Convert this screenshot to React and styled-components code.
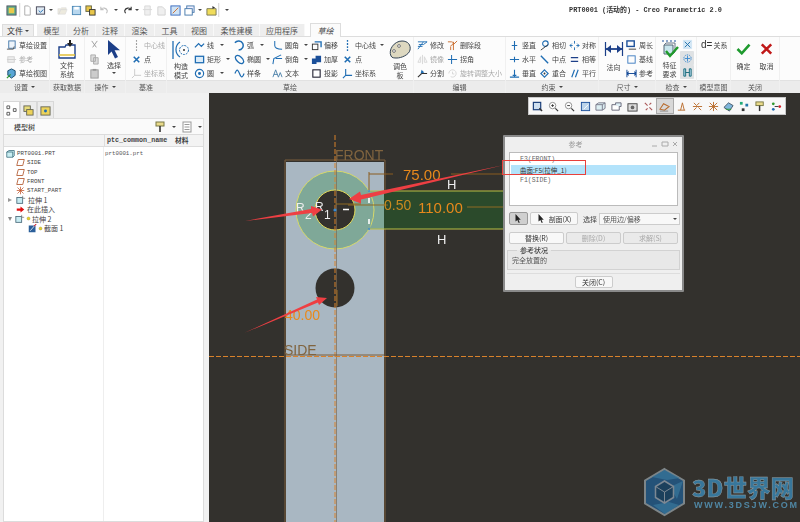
import React from 'react';
import styled, { createGlobalStyle } from 'styled-components';

const Global = createGlobalStyle`
  html, body { margin: 0; padding: 0; background: #fff; overflow: hidden; }
  body { font-family: "Noto Sans CJK SC", "Liberation Sans", sans-serif; }
  * { box-sizing: border-box; }
`;
const CJK = `"Noto Sans CJK SC", "Liberation Sans", sans-serif`;
const MONO = `"Liberation Mono", "Noto Sans CJK SC", monospace`;

const Page = styled.div`width: 800px; height: 522px; display: flex; flex-direction: column; overflow: hidden; filter: blur(0.35px); color: #444;`;
const TopBar = styled.header`height: 24px; flex: none; display: flex; align-items: flex-start; padding: 3px 0 0 3px; background: #fff;`;
const QSlot = styled.div`width: ${p => p.$w}px; height: 14px; flex: none; display: flex; align-items: center; justify-content: center; opacity: ${p => p.$dim ? .45 : 1};`;
const QSep = styled.div`width: 2px; height: 14px; flex: none; background: #ddd; border-right: 1px solid #f5f5f5;`;
const Caret = styled.span`display: inline-block; width: 0; height: 0; flex: none; border-left: 2px solid transparent; border-right: 2px solid transparent; border-top: 2.5px solid #444;`;
const Title = styled.div`margin-left: auto; margin-right: 78px; margin-top: 2px; font: bold 6.9px/11px ${MONO}; color: #333; white-space: nowrap;`;

const TabRow = styled.nav`height: 12px; flex: none; display: flex; align-items: flex-end; padding-left: 2px; background: #fff; position: relative; z-index: 1;`;
const FileTab = styled.div`width: 32px; height: 12px; margin-right: 3px; background: #eee; border: 1px solid #ddd; border-bottom: 0; display: flex; gap: 2px; align-items: center; justify-content: center; font-size: 8px; color: #333;`;
const Tab = styled.div`width: ${p => p.$w}px; height: 12px; flex: none; background: #eee; border-right: 1px solid #f8f8f8; display: flex; align-items: center; justify-content: center; font-size: 8px; color: #555;`;
const ActiveTab = styled.div`width: 31px; height: 14px; margin-left: 5px; margin-bottom: -1px; background: #fbfbfb; border: 1px solid #ddd; border-bottom: 0; display: flex; align-items: center; justify-content: center; font: italic 8px ${CJK}; color: #444;`;

const Ribbon = styled.section`height: 57px; flex: none; display: flex; background: #fcfcfc; border-top: 1px solid #ddd;`;
const Group = styled.div`width: ${p => p.$w}px; flex: none; display: flex; flex-direction: column; border-right: 1px solid #f0f0f0;`;
const GroupBody = styled.div`height: 43px; flex: none; display: flex; padding-left: ${p => p.$pad || 0}px; gap: ${p => p.$gap || 0}px; justify-content: ${p => p.$center ? 'center' : 'flex-start'};`;
const GroupLabel = styled.div`height: 13px; flex: none; background: #ececec; border-top: 1px solid #e2e2e2; display: flex; align-items: center; justify-content: center; gap: 3px; font-size: 7px; color: #555;`;
const Filler = styled.div`flex: 1; display: flex; flex-direction: column; > div:last-child { margin-top: auto; height: 13px; background: #ececec; border-top: 1px solid #e2e2e2; }`;
const Col = styled.div`width: ${p => p.$w}px; flex: none; display: flex; flex-direction: column; padding-top: 1px;`;
const Tool = styled.div`height: 14px; display: flex; align-items: center; gap: 2px; white-space: nowrap; font-size: 7px; color: ${p => p.$off ? '#aaa' : '#444'}; > svg { flex: none; opacity: ${p => p.$off ? .45 : 1}; }`;
const DEq = styled.span`font: 10px/14px "Liberation Sans", sans-serif; color: #333; margin-right: -1px;`;
const Big = styled.div`width: ${p => p.$w}px; flex: none; display: flex; flex-direction: column; align-items: center; padding-top: ${p => p.$top ?? 3}px; font-size: 7px; line-height: 8.5px; color: #444; text-align: center;`;
const BigLabel = styled.div`margin-top: ${p => p.$m ?? 2}px; display: flex; flex-direction: column; align-items: center; gap: ${p => p.$g || 0}px;`;
const Stack = styled.div`width: 14px; flex: none; display: flex; flex-direction: column;`;
const StackCell = styled.div`height: 14px; display: flex; align-items: center; justify-content: center; background: ${p => p.$on ? '#dfe2e4' : 'transparent'}; border-radius: 1px;`;

const Main = styled.main`flex: 1; min-height: 0; display: flex;`;
const Side = styled.aside`width: 209px; flex: none; background: #f1f1f1; padding: 8px 5px 0 3px; display: flex; flex-direction: column;`;
const SideTabs = styled.div`height: 17px; flex: none; display: flex;`;
const SideTab = styled.div`width: 17px; height: 17px; background: ${p => p.$on ? '#fff' : '#ececec'}; border: 1px solid #d8d8d8; border-bottom: 0; display: flex; align-items: center; justify-content: center;`;
const TreeHead = styled.div`height: 16px; flex: none; background: #fafafa; border: 1px solid #e0e0e0; border-bottom: 0; display: flex; align-items: center; padding: 0 1px 0 10px; font-size: 7px; font-weight: 500; color: #444;`;
const HeadTools = styled.div`margin-left: auto; display: flex; align-items: center; gap: 5px;`;
const Tree = styled.div`flex: 1; background: #fff; border: 1px solid #dcdcdc; display: flex; flex-direction: column; min-height: 0;`;
const ColHeads = styled.div`height: 12px; flex: none; background: #f3f3f3; border-bottom: 1px solid #ddd; display: grid; grid-template-columns: 100px 69px 1fr;`;
const ColHead = styled.div`font: bold 6.7px/11px ${p => p.$cjk ? CJK : MONO}; color: #444; padding-left: ${p => p.$pl || 0}px; border-left: ${p => p.$line ? '1px solid #ddd' : 0}; white-space: nowrap;`;
const TreeBody = styled.div`flex: 1; display: grid; grid-template-columns: 100px 1fr;`;
const Names = styled.div`display: flex; flex-direction: column; padding-top: 2px; border-right: 1px solid #eee;`;
const Row = styled.div`height: 9.3px; display: flex; align-items: center; gap: ${p => p.$g ?? 2}px; padding-left: ${p => p.$in}px; white-space: nowrap; font: ${p => p.$latin ? `5.8px ${MONO}` : `7px ${CJK}`}; color: #444;`;
const Tri = styled.span`width: 0; height: 0; margin-right: 2px; flex: none; ${p => p.$open
  ? 'border-left: 2.5px solid transparent; border-right: 2.5px solid transparent; border-top: 4px solid #888;'
  : 'border-top: 2.5px solid transparent; border-bottom: 2.5px solid transparent; border-left: 4px solid #999;'}`;
const Values = styled.div`padding: 3px 0 0 1px; font: 5.8px/8px ${MONO}; color: #555;`;

const Canvas = styled.div`flex: 1; position: relative; background: #33312d; overflow: hidden;`;
const Drawing = styled.svg`position: absolute; inset: 0; width: 100%; height: 100%; display: block;`;
const FloatBar = styled.div`position: absolute; left: 319px; top: 4px; width: 258px; height: 18px; display: flex; background: #f8f8f8; border: 1px solid #c9c9c9; padding: 0 1px;`;
const FloatBtn = styled.div`flex: 1; display: flex; align-items: center; justify-content: center; background: ${p => p.$on ? '#d8d8d8' : 'transparent'}; border: ${p => p.$on ? '1px solid #aaa' : 0};`;

const Dialog = styled.div`position: absolute; left: 294px; top: 42px; width: 181px; height: 157px; background: #efefef; border: 2px solid #8a8a8a; border-radius: 1px; display: flex; flex-direction: column; padding: 0 2px; font-size: 7px; color: #444;`;
const DlgTitle = styled.div`height: 14px; flex: none; position: relative; display: flex; align-items: center; justify-content: center; padding-right: 36px; color: #999; font-size: 7px;`;
const DlgCtl = styled.div`position: absolute; right: 2px; top: 4px; display: flex;`;
const List = styled.div`height: 54px; flex: none; margin: 1px 2px 0; background: #fff; border: 1px solid #bbb; padding: 1px 1px; position: relative;`;
const Item = styled.div`height: 10.5px; display: flex; align-items: center; padding-left: 9px; background: ${p => p.$on ? '#b3e3fb' : 'transparent'}; font: 6.5px ${p => p.$on ? CJK : MONO}; color: ${p => p.$on ? '#333' : '#666'};`;
const Mark = styled.div`position: absolute; left: -8px; top: 7px; width: 84px; height: 15px; border: 1.5px solid #e8403c; pointer-events: none;`;
const DlgRow = styled.div`display: flex; align-items: center; gap: ${p => p.$gap || 2}px; margin: ${p => p.$m || '0'}; height: ${p => p.$h}px; flex: none;`;
const Btn = styled.div`width: ${p => p.$w}px; flex: ${p => p.$w ? 'none' : 1}; height: ${p => p.$h || 12}px; display: flex; align-items: center; justify-content: center; gap: 3px; border: 1px solid ${p => p.$down ? '#999' : '#ccc'}; background: ${p => p.$down ? '#cfcfcf' : p.$off ? '#eaeaea' : '#f8f8f8'}; color: ${p => p.$off ? '#aaa' : '#333'}; font-size: 7px; border-radius: 2px; white-space: nowrap;`;
const SelectLabel = styled.span`margin-left: 3px;`;
const Select = styled.div`flex: 1; height: 12px; display: flex; align-items: center; justify-content: space-between; padding: 0 2px 0 3px; background: #f8f8f8; border: 1px solid #ccc; color: #555; font-size: 7px;`;
const Status = styled.fieldset`height: 23px; flex: none; margin: 3px 0 0; padding: 2px 4px 0; border: 1px solid #d2d2d2; background: #e8e8e8; line-height: 9px; font-size: 7px; color: #555; legend { padding: 0 3px; margin-left: 5px; line-height: 7px; height: 7px; color: #444; font-weight: 500; }`;
const DlgFoot = styled.div`flex: 1; display: flex; align-items: center; justify-content: center; border-top: 1px solid #ddd; margin-top: 3px;`;

const Logo = styled.div`position: absolute; left: 433px; top: 374px; display: flex; align-items: center; gap: 5px; opacity: .72;`;
const LogoText = styled.div`display: flex; flex-direction: column; color: #3a93c6;`;
const LogoMain = styled.div`font: 900 23.5px/25px ${CJK}; white-space: nowrap; -webkit-text-stroke: .4px #b9c8d0;`;
const LogoSub = styled.div`font: bold 9px/9px "Liberation Sans", sans-serif; letter-spacing: 1.8px; margin: 1px 0 0 2px; white-space: nowrap; color: #5aa6cf;`;

const B = '#1f6db3', D = '#333', G = '#8a8a8a', O = '#c96a2a', R = '#d5202a', GR = '#2f9a2f';
const ic = {
  app: <><rect x="1" y="1" width="10" height="10" fill="#5aa88a" stroke="#556"/><rect x="3" y="3" width="6" height="6" fill="#e9c94c"/></>,
  page: <path d="M3 1h4l2 2v8H3z" fill="#fff" stroke="#aaa" />,
  win: <><rect x="1.5" y="2" width="9" height="8" fill="#dfe9f2" stroke="#445"/><path d="M4 6l2 2 3-3" stroke={B} fill="none"/></>,
  folder: <path d="M1 4h3l1-1h5v2H4L2 10H1zM2 10l2-5h7l-2 5z" fill="#d8d2b8" stroke="#aaa" strokeWidth=".6"/>,
  save: <><rect x="1.5" y="1.5" width="9" height="9" fill="#b8d7ee" stroke="#4a86b5"/><rect x="3.5" y="2" width="5" height="3" fill="#fff"/></>,
  savec: <><rect x="1" y="1" width="6" height="6" fill="#e8c64a" stroke="#664"/><rect x="5" y="5" width="6" height="6" fill="#e8c64a" stroke="#333"/></>,
  undo: <path d="M2 5a4 4 0 0 1 7 1 4 4 0 0 1-1 3M2 2v3h3" fill="none" stroke="#777" strokeWidth="1.2"/>,
  redo: <path d="M10 5a4 4 0 0 0-7 1 4 4 0 0 0 1 3M10 2v3H7" fill="none" stroke="#333" strokeWidth="1.2"/>,
  gray1: <path d="M3 1h6v10H3zM1 5h10" fill="#ddd" stroke="#aaa"/>,
  gray2: <path d="M2 2h5l3 3v6H2z" fill="#ddd" stroke="#999"/>,
  blue: <><rect x="1" y="1" width="10" height="10" fill="#cfe3f5" stroke="#36b"/><path d="M3 9l6-6" stroke={O}/></>,
  wins: <><rect x="3" y="1" width="8" height="7" fill="#eef" stroke="#47a"/><rect x="1" y="4" width="8" height="7" fill="#fff" stroke="#47a"/></>,
  yfolder: <><path d="M1 4h10v7H1z" fill="#f0dc5a" stroke="#775"/><path d="M7 1l3 2-3 1z" fill="#333"/></>,
  sset: <><rect x="3" y="1" width="7" height="8" fill="#eef4fa" stroke="#47a"/><path d="M1 10h7l1-3" fill="none" stroke="#555"/></>,
  ref: <><rect x="2" y="3" width="7" height="6" fill="#ddd" stroke="#999"/><path d="M1 6h10" stroke="#999"/></>,
  view: <><path d="M6 1l4 2v5l-4 3-4-3V3z" fill="#5aa6d6" stroke="#146"/><path d="M1 11l4-4" stroke={GR} strokeWidth="1.4"/></>,
  cut: <path d="M3 1l5 7M9 1L4 8" stroke="#999" fill="none"/>,
  copy: <path d="M2 1h5v7H2zM5 4h5v7H5z" fill="#ddd" stroke="#aaa"/>,
  paste: <><rect x="2" y="2" width="8" height="9" fill="#ccc" stroke="#999"/><rect x="4" y="1" width="4" height="2" fill="#999"/></>,
  cline: <path d="M6 0v12" stroke={D} strokeDasharray="2 1.4" strokeWidth="1.2"/>,
  clineb: <path d="M6 0v12" stroke={B} strokeDasharray="2 1.4" strokeWidth="1.4"/>,
  point: <path d="M3 3l6 6M9 3l-6 6" stroke={B} strokeWidth="1.7"/>,
  csys: <path d="M4 1v7h7M4 8L1 11" fill="none" stroke={G}/>,
  csysb: <path d="M4 1v7h7M4 8L1 11" fill="none" stroke={B} strokeWidth="1.2"/>,
  line: <path d="M1 8l4-4 3 3 3-3" fill="none" stroke={B} strokeWidth="1.4"/>,
  rect: <rect x="1.5" y="2.5" width="9" height="7" fill="#dcecf8" stroke={B} strokeWidth="1.4"/>,
  circle: <><circle cx="6" cy="6" r="4.5" fill="none" stroke={B} strokeWidth="1.3"/><circle cx="6" cy="6" r="1.6" fill={B}/></>,
  arc: <path d="M1 3a5 5 0 1 1 4 8" fill="none" stroke={B} strokeWidth="1.6"/>,
  ellipse: <ellipse cx="6" cy="6" rx="5.4" ry="3" transform="rotate(45 6 6)" fill="none" stroke={B} strokeWidth="1.4"/>,
  spline: <path d="M1 6c2-5 3-5 5 0s3 5 5 0" fill="none" stroke={B} strokeWidth="1.3"/>,
  fillet: <path d="M3 1v5c0 3 2 4 8 4" fill="none" stroke={B} strokeWidth="1.1"/>,
  chamfer: <path d="M1 11l1-6 8-4M4 5l7 0" fill="none" stroke={B} strokeWidth="1.1"/>,
  textA: <path d="M1 10L4 2l3 8M2 7h4M7 10l2-5 2 5" fill="none" stroke="#4a80a8"/>,
  offset: <><rect x="1.5" y="4.5" width="6" height="6" fill="none" stroke={D}/><path d="M4 2h7v6" fill="none" stroke={B} strokeWidth="1.5"/></>,
  thick: <path d="M1 5h4V2h6v7H6v2H1z" fill="#1b4f9a"/>,
  proj: <rect x="2" y="2" width="8" height="8" fill="#fff" stroke="#223" strokeWidth="1.2"/>,
  modify: <path d="M1 2h10L7 5H2M1 7h5M1 10l6-8" fill="none" stroke={B}/>,
  mirror: <path d="M6 1v10M4 3L1 9h3zM8 3l3 6H8z" fill="none" stroke="#aaa"/>,
  split: <><path d="M1 10l4-4h6" fill="none" stroke={D} strokeWidth="1.2"/><path d="M5 2l3 3-4 1z" fill={B}/></>,
  del: <path d="M1 2h4c3 0 2 4-1 4M7 2v9M11 1L7 5M4 7v4" fill="none" stroke={O} strokeWidth="1"/>,
  corner: <path d="M1 6h10M5 1v10" stroke={B} strokeWidth="1.1"/>,
  rot: <path d="M2 6a4 4 0 1 1 2 3.4M6 4v2.5H8" fill="none" stroke="#aaa"/>,
  vert: <path d="M6 1v10M3 6h6" stroke={B} strokeWidth="1.2"/>,
  horz: <path d="M1 6h10M6 3v6" stroke={B} strokeWidth="1.2"/>,
  perp: <path d="M1 10h10M6 2v8M4 8h4" fill="none" stroke={B} strokeWidth="1.2"/>,
  tan: <><circle cx="7" cy="4" r="3" fill="none" stroke={B} strokeWidth="1.2"/><path d="M2 11l8-6" stroke={D}/></>,
  mid: <path d="M2 2l8 8" stroke={B} strokeWidth="1.5"/>,
  coin: <><path d="M6 2l4 4-4 4-4-4z" fill="none" stroke={B} strokeWidth="1.2"/><circle cx="6" cy="6" r="1" fill={D}/></>,
  sym: <path d="M6 1v3M6 8v3M1 6h3M8 6h3M3 4l-2 2 2 2M9 4l2 2-2 2" fill="none" stroke={B}/>,
  equal: <path d="M2 4h8M2 8h8" stroke="#1c3f88" strokeWidth="1.5"/>,
  para: <path d="M3 10l3-8M7 10l3-8" stroke={B} strokeWidth="1.3"/>,
  peri: <><rect x="1" y="1" width="8" height="6" fill="none" stroke="#1b4f9a" strokeWidth="1.5"/><path d="M3 10h8" stroke={D}/></>,
  base: <rect x="2" y="2" width="8" height="8" fill="none" stroke="#3a7ac0"/>,
  dref: <path d="M1 2v8M11 2v8M1 6h10M3 4L1 6l2 2M9 4l2 2-2 2" fill="none" stroke="#1b4f9a" strokeWidth="1.1"/>,
  ins1: <><rect x="1" y="1" width="10" height="10" fill="#d4e7f5"/><path d="M3 3l6 6M9 3L3 9" stroke="#1e6ea8"/></>,
  ins2: <><circle cx="6" cy="6" r="4" fill="none" stroke="#3a8ad0" strokeDasharray="1.5 1"/><path d="M6 3v6M3 6h6" stroke="#3a8ad0"/></>,
  ins3: <path d="M2 2h2v8H2zM8 2h2v8H8zM4 6h4" fill="#bde" stroke="#167"/>,
  refit: <><rect x="1.5" y="1.5" width="8" height="8" fill="#cfe0f0" stroke="#1b3f7a" strokeWidth="1.3"/><path d="M8 8l3 3" stroke={D} strokeWidth="1.5"/></>,
  zin: <><circle cx="5" cy="5" r="3.5" fill="#fff" stroke={G}/><path d="M3.5 5h3M5 3.5v3" stroke={D}/><path d="M8 8l3 3" stroke={D} strokeWidth="1.3"/></>,
  zout: <><circle cx="5" cy="5" r="3.5" fill="#fff" stroke={G}/><path d="M3.5 5h3" stroke={D}/><path d="M8 8l3 3" stroke={D} strokeWidth="1.3"/></>,
  repaint: <><rect x="1.5" y="1.5" width="9" height="9" fill="#bcd4ea" stroke="#1b4f9a"/><path d="M4 9l5-5" stroke="#fff"/></>,
  shade: <path d="M1 4l3-2h7v6l-3 2H1zM1 4h7v6M8 4l3-2" fill="#dceef2" stroke="#778"/>,
  view2: <><path d="M1 4h8v6H1z" fill="#fff" stroke="#667"/><path d="M5 4V2h6v4H9" fill="#ddeef5" stroke="#667"/></>,
  cam: <><rect x="1" y="3" width="10" height="8" fill="#ddd" stroke="#444"/><circle cx="6" cy="7" r="2" fill="#666"/></>,
  cons: <path d="M2 2l3 3M7 7l3 3M9 2L7 4M3 10l2-2" stroke="#a55" strokeWidth="1.2"/>,
  sk: <><path d="M1 9l4-6 6 3-5 4z" fill="none" stroke="#b86a2a" strokeWidth="1.1"/><path d="M1 11h9" stroke="#888"/></>,
  sk2: <path d="M2 10h8M5 10l2-8 2 8" fill="none" stroke="#b86a2a"/>,
  sk3: <path d="M2 2l3 3M8 2L5 5M2 10l3-3M10 10L7 7M1 6h10" stroke="#b86a2a"/>,
  sk4: <path d="M6 1v10M1 6h10M2 2l8 8M10 2l-8 8" stroke="#b86a2a"/>,
  net: <><path d="M1 7l5-5 5 3-4 6z" fill="#7fb6dc" stroke="#456"/><path d="M3 9h6" stroke={GR}/></>,
  grid: <><rect x="1" y="1" width="3" height="3" fill="#2a7"/><rect x="7" y="3" width="3" height="3" fill="#27a"/><rect x="3" y="8" width="3" height="3" fill="#333"/></>,
  tools: <><rect x="1" y="1" width="8" height="4" fill="#e9da8a" stroke="#774"/><path d="M5 5v6" stroke={D} strokeWidth="1.6"/></>,
  link: <><circle cx="2.5" cy="3" r="1.5" fill={GR}/><circle cx="2.5" cy="9" r="1.5" fill={B}/><circle cx="9.5" cy="6" r="1.5" fill={R}/><path d="M4 6h4" stroke={D}/></>,
  solid: <path d="M1 4l3-2h7v7l-2 2H1zM1 4h8v7" fill="#c9eef2" stroke="#367"/>,
  plane: <path d="M3 2h8L9 10H1z" fill="none" stroke="#b0552a" strokeWidth="1.1"/>,
  csO: <path d="M6 1v10M1 6h10M2 2l8 8M10 2l-8 8" stroke="#c2542a"/>,
  feat: <><rect x="1" y="3" width="7" height="7" fill="#c9ecf2" stroke="#467"/><path d="M8 1v3h3" fill="none" stroke="#888"/></>,
  insert: <path d="M1 4.5h5V2l5 4-5 4V7.5H1z" fill="#e01010"/>,
  sect: <><rect x="1" y="2" width="9" height="9" fill="#2b5f9a"/><path d="M3 9l6-7" stroke="#fff"/><path d="M8 3l3-3" stroke={R} strokeWidth="1.4"/></>,
  star: <circle cx="6" cy="6" r="3.6" fill="#e8d22a" stroke="#8a7a10" strokeWidth=".8"/>,
  treeIc: <path d="M1 1h3v3H1zM1 8h3v3H1zM8 4h3v3H8z" fill="none" stroke="#555"/>,
  layers: <><rect x="1" y="1" width="7" height="6" fill="#e8dc7a" stroke="#665"/><rect x="4" y="5" width="7" height="6" fill="#ecd25a" stroke="#665"/></>,
  favs: <><rect x="1" y="2" width="10" height="9" fill="#ecd25a" stroke="#665"/><circle cx="6" cy="6.5" r="1.6" fill={B}/></>,
  sheet: <><rect x="2" y="1" width="8" height="10" fill="#fff" stroke="#999"/><path d="M3.5 3.5h5M3.5 6h5M3.5 8.5h5" stroke="#999"/></>,
  cursor: <path d="M2 0l0 10 2.5-2 1.8 4 1.4-.7-1.8-3.8H9z" fill="#222"/>,
};
const Ic = ({ n, s = 11 }) => <svg width={s} height={s} viewBox="0 0 12 12" aria-hidden="true">{ic[n]}</svg>;

const T = ({ i, off, caret, children }) => (
  <Tool $off={off}><Ic n={i} />{children}{caret && <Caret style={{ marginLeft: caret }} />}</Tool>
);

const quick = [[16,'app'],0,[13,'page'],[13,'win'],[8],[14,'folder',1],[14,'save'],[14,'savec'],[15,'undo',1],[8],[14,'redo'],[6],[14,'gray1',1],[14,'gray2',1],[14,'blue'],[14,'wins'],[8],[14,'yfolder'],0,[14]];
const tabs = [['模型',30],['分析',29],['注释',29],['渲染',30],['工具',30],['视图',29],['柔性建模',46],['应用程序',45]];
const floatIcons = ['refit','zin','zout','repaint','shade','view2','cam','cons','sk','sk2','sk3','sk4','net','grid','tools','link'];

const FileCabinet = () => (
  <svg width="18" height="19" viewBox="0 0 18 19">
    <path d="M1 7h6l1-2h9v13H1z" fill="#fff" stroke="#1c3f88" strokeWidth="1.4"/>
    <path d="M1 15h16" stroke="#e2bf3a" strokeWidth="1.5"/>
    <path d="M9 4l4-3v2h4v2h-4v2z" fill="#222" transform="rotate(-90 12 4)"/>
  </svg>
);
const Construct = () => (
  <svg width="20" height="20" viewBox="0 0 20 20">
    <path d="M2 1v18" stroke="#1f6db3" strokeWidth="1.3"/>
    <path d="M9 2a9 9 0 0 0 0 15" fill="none" stroke="#1f6db3" strokeWidth="1.2"/>
    <circle cx="13" cy="10" r="4.5" fill="none" stroke="#1f6db3" strokeDasharray="2 1"/>
    <circle cx="13" cy="10" r="1" fill="#333"/>
  </svg>
);
const Palette = () => (
  <svg width="24" height="20" viewBox="0 0 24 20">
    <path d="M3 16C0 10 6 1 14 1c6 0 9 4 8 9s-9 8-13 8c-3 0-5 0-6-2z" fill="#ddd8c0" stroke="#345"/>
    <circle cx="11" cy="6" r="1.4" fill="#fff" stroke="#777"/><circle cx="6" cy="11" r="1.4" fill="#fff" stroke="#777"/>
  </svg>
);
const Normal = () => (
  <svg width="20" height="14" viewBox="0 0 20 14">
    <path d="M1.500 0v14M18.500 0v14" stroke="#1b3f88" strokeWidth="1.2"/>
    <path d="M2 7h16" stroke="#1b3f88" strokeWidth="1.8"/>
    <path d="M7 3L2 7l5 4zM13 3l5 4-5 4z" fill="#1b3f88"/>
  </svg>
);
const FeatReq = () => (
  <svg width="18" height="19" viewBox="0 0 18 19">
    <path d="M1 1h15" stroke="#1b4f9a" strokeDasharray="2 2" strokeWidth="1.2"/>
    <path d="M3 5h9v9H3z" fill="#c9e6ee" stroke="#567"/>
    <path d="M3 5l2-2h9v9l-2 2" fill="none" stroke="#678"/>
    <path d="M5 11l4 5 8-9" fill="none" stroke="#1f9a2a" strokeWidth="2.4"/>
  </svg>
);
const Arrow = () => (
  <svg width="14" height="19" viewBox="0 0 14 19"><path d="M1 0v15l3.6-3.4L8 18.5l3-1.4-3.4-6.8H13z" fill="#1c3f88"/></svg>
);
const Check = () => <svg width="15" height="12" viewBox="0 0 17 14"><path d="M1.500 7l5 5L15.500 2" fill="none" stroke="#1e9a2e" strokeWidth="3"/></svg>;
const Cross = () => <svg width="13" height="12" viewBox="0 0 14 14"><path d="M1.500 1.500l11 11M12.500 1.500l-11 11" stroke="#c01818" strokeWidth="3"/></svg>;

const CAD = () => (
  <Drawing viewBox="209 93 591 429">
    <path d="M285 160h100v362" fill="none" stroke="#7d5f3c" strokeWidth="1"/>
    <path d="M285 160v362" stroke="#7d5f3c"/>
    <rect x="286" y="162" width="98" height="360" fill="#a9b7c2"/>
    <rect x="370" y="191" width="14" height="38" fill="#7fa898"/>
    <rect x="384" y="191" width="120" height="38" fill="#2b4a2b"/>
    <circle cx="335" cy="210" r="39" fill="#7fa898" stroke="#d6d96a"/>
    <path d="M369 191h135M369 229h135" stroke="#b9bd45" strokeWidth="1.2"/>
    <path d="M369 191.500v37" stroke="#7fa898" strokeWidth="3"/>
    <circle cx="335" cy="210" r="20" fill="#33312d" stroke="#e4dc5a" strokeWidth="1"/>
    <circle cx="335" cy="288" r="19.500" fill="#33312d"/>
    <path d="M335 135V522" stroke="#d9822b" strokeWidth="1" strokeDasharray="5 2"/>
    <path d="M336.500 160V522" stroke="#7a6a55" strokeWidth=".7"/>
    <path d="M209 356.500H800" stroke="#d9822b" strokeWidth="1" strokeDasharray="5 2"/>
    <path d="M286 355h98" stroke="#7d5f3c"/>
    <path d="M369 172v18M369 174h24M451 174h53" stroke="#8a5c20" strokeWidth="1"/>
    <path d="M335 204h26M348 205h40M467 207h37" stroke="#8f6a25" strokeWidth="1"/>
    <path d="M337 290v16" stroke="#a06a20" strokeWidth="1"/>
    <path d="M369 198v5M369 219v5M343 209.500h6" stroke="#fff" strokeWidth="1.6"/>
    <circle cx="335" cy="210" r="1.6" fill="#3a8ad0"/>
    <circle cx="369" cy="191" r="1" fill="#3a8ad0"/><circle cx="369" cy="229" r="1" fill="#3a8ad0"/>
    <g fontFamily="'Liberation Sans', sans-serif">
      <text x="335" y="160" fontSize="14" fill="#80643f">FRONT</text>
      <text x="284" y="355" fontSize="14" fill="#80643f">SIDE</text>
      <text x="403" y="180" fontSize="15" fill="#e8891c">75.00</text>
      <text x="384" y="210" fontSize="14" fill="#c98a1f">0.50</text>
      <text x="418" y="213" fontSize="15" fill="#e8891c">110.00</text>
      <text x="285" y="320" fontSize="14" fill="#e8891c">40.00</text>
      <text x="447" y="189" fontSize="13" fill="#eee">H</text>
      <text x="437" y="244" fontSize="13" fill="#eee">H</text>
      <text x="296" y="212" fontSize="12" fill="#eee">R</text>
      <text x="305" y="219" fontSize="12" fill="#eee">2</text>
      <text x="315" y="211" fontSize="12" fill="#eee">R</text>
      <text x="324" y="219" fontSize="12" fill="#eee">1</text>
    </g>
    <polygon points="245,221 312,213 313,216.500 322,209.500 311,206 311,209" fill="#ee3f43"/>
    <polygon points="244,333 318,302.500 319,305 327,298 316,297 317,299.500" fill="#ee3f43"/>
    <polygon points="504,165 361,195 360,191.500 349,199 361,203.500 361,199.500" fill="#ee3f43"/>
  </Drawing>
);

export default function App() {
  return (
    <Page>
      <Global />
      <TopBar>
        {quick.map((q, i) => q === 0 ? <QSep key={i} /> : (
          <QSlot key={i} $w={q[0]} $dim={q[2]}>{q[1] ? <Ic n={q[1]} /> : <Caret />}</QSlot>
        ))}
        <Title>PRT0001 (活动的) - Creo Parametric 2.0</Title>
      </TopBar>
      <TabRow>
        <FileTab>文件<Caret /></FileTab>
        {tabs.map(([t, w]) => <Tab key={t} $w={w}>{t}</Tab>)}
        <ActiveTab>草绘</ActiveTab>
      </TabRow>
      <Ribbon>
        <Group $w={50}>
          <GroupBody $pad={6}><Col $w={44}>
            <T i="sset">草绘设置</T><T i="ref" off>参考</T><T i="view">草绘视图</T>
          </Col></GroupBody>
          <GroupLabel>设置<Caret /></GroupLabel>
        </Group>
        <Group $w={35}>
          <GroupBody $center><Big $w={34}><FileCabinet /><BigLabel>文件<span>系统</span></BigLabel></Big></GroupBody>
          <GroupLabel>获取数据</GroupLabel>
        </Group>
        <Group $w={41}>
          <GroupBody $pad={4}>
            <Col $w={16}><T i="cut" /><T i="copy" /><T i="paste" /></Col>
            <Big $w={18}><Arrow /><BigLabel $m={2} $g={2}>选择<Caret /></BigLabel></Big>
          </GroupBody>
          <GroupLabel>操作<Caret /></GroupLabel>
        </Group>
        <Group $w={41}>
          <GroupBody $pad={5}><Col $w={36}>
            <T i="cline" off>中心线</T><T i="point">点</T><T i="csys" off>坐标系</T>
          </Col></GroupBody>
          <GroupLabel>基准</GroupLabel>
        </Group>
        <Group $w={247}>
          <GroupBody $pad={1}>
            <Big $w={26}><Construct /><BigLabel>构造<span>模式</span></BigLabel></Big>
            <Col $w={40}><T i="line" caret={4}>线</T><T i="rect" caret={3}>矩形</T><T i="circle" caret={4}>圆</T></Col>
            <Col $w={38}><T i="arc" caret={4}>弧</T><T i="ellipse" caret={3}>椭圆</T><T i="spline">样条</T></Col>
            <Col $w={39}><T i="fillet" caret={3}>圆角</T><T i="chamfer" caret={3}>倒角</T><T i="textA">文本</T></Col>
            <Col $w={31}><T i="offset">偏移</T><T i="thick">加厚</T><T i="proj">投影</T></Col>
            <Col $w={46}><T i="clineb" caret={2}>中心线</T><T i="point">点</T><T i="csysb">坐标系</T></Col>
            <Big $w={24}><Palette /><BigLabel>调色<span>板</span></BigLabel></Big>
          </GroupBody>
          <GroupLabel>草绘</GroupLabel>
        </Group>
        <Group $w={92}>
          <GroupBody $pad={3}>
            <Col $w={30}><T i="modify">修改</T><T i="mirror" off>镜像</T><T i="split">分割</T></Col>
            <Col $w={58}><T i="del">删除段</T><T i="corner">拐角</T><T i="rot" off>旋转调整大小</T></Col>
          </GroupBody>
          <GroupLabel>编辑</GroupLabel>
        </Group>
        <Group $w={93}>
          <GroupBody $pad={3}>
            <Col $w={30}><T i="vert">竖直</T><T i="horz">水平</T><T i="perp">垂直</T></Col>
            <Col $w={30}><T i="tan">相切</T><T i="mid">中点</T><T i="coin">重合</T></Col>
            <Col $w={28}><T i="sym">对称</T><T i="equal">相等</T><T i="para">平行</T></Col>
          </GroupBody>
          <GroupLabel>约束<Caret /></GroupLabel>
        </Group>
        <Group $w={57}>
          <GroupBody $pad={2}>
            <Big $w={25} $top={5}><Normal /><BigLabel $m={7}>法向</BigLabel></Big>
            <Col $w={30}><T i="peri">周长</T><T i="base">基线</T><T i="dref">参考</T></Col>
          </GroupBody>
          <GroupLabel>尺寸<Caret /></GroupLabel>
        </Group>
        <Group $w={41}>
          <GroupBody $pad={3}>
            <Big $w={21}><FeatReq /><BigLabel>特征<span>要求</span></BigLabel></Big>
            <Stack><StackCell><Ic n="ins1" /></StackCell><StackCell $on><Ic n="ins2" /></StackCell><StackCell $on><Ic n="ins3" /></StackCell></Stack>
          </GroupBody>
          <GroupLabel>检查<Caret /></GroupLabel>
        </Group>
        <Group $w={34}>
          <GroupBody $pad={4}><Col $w={30}><Tool><DEq>d=</DEq>关系</Tool></Col></GroupBody>
          <GroupLabel>模型意图</GroupLabel>
        </Group>
        <Group $w={49}>
          <GroupBody $center $gap={5}>
            <Big $w={18} $top={6}><Check /><BigLabel $m={7}>确定</BigLabel></Big>
            <Big $w={18} $top={6}><Cross /><BigLabel $m={7}>取消</BigLabel></Big>
          </GroupBody>
          <GroupLabel>关闭</GroupLabel>
        </Group>
        <Filler><div /></Filler>
      </Ribbon>
      <Main>
        <Side>
          <SideTabs>
            <SideTab $on><Ic n="treeIc" /></SideTab>
            <SideTab><Ic n="layers" /></SideTab>
            <SideTab><Ic n="favs" /></SideTab>
          </SideTabs>
          <TreeHead>模型树
            <HeadTools><Ic n="tools" s={12} /><Caret /><Ic n="sheet" s={12} /><Caret /></HeadTools>
          </TreeHead>
          <Tree>
            <ColHeads>
              <div />
              <ColHead $pl={2} $line>ptc_common_name</ColHead>
              <ColHead $cjk $pl={2}>材料</ColHead>
            </ColHeads>
            <TreeBody>
              <Names>
                <Row $in={2} $latin><Ic n="solid" s={9} />PRT0001.PRT</Row>
                <Row $in={12} $latin><Ic n="plane" s={9} />SIDE</Row>
                <Row $in={12} $latin><Ic n="plane" s={9} />TOP</Row>
                <Row $in={12} $latin><Ic n="plane" s={9} />FRONT</Row>
                <Row $in={12} $latin><Ic n="csO" s={9} />START_PART</Row>
                <Row $in={4}><Tri /><Ic n="feat" s={10} />拉伸 1</Row>
                <Row $in={12}><Ic n="insert" s={9} />在此插入</Row>
                <Row $in={4} $g={1}><Tri $open /><Ic n="feat" s={10} /><Ic n="star" s={5} />拉伸 2</Row>
                <Row $in={24} $g={1}><Ic n="sect" s={9} /><Ic n="star" s={5} />截面 1</Row>
              </Names>
              <Values>prt0001.prt</Values>
            </TreeBody>
          </Tree>
        </Side>
        <Canvas>
          <CAD />
          <FloatBar>
            {floatIcons.map((n, i) => <FloatBtn key={i} $on={i === 8}><Ic n={n} /></FloatBtn>)}
          </FloatBar>
          <Dialog>
            <DlgTitle>参考
              <DlgCtl>
                <svg width="26" height="6" viewBox="0 0 26 6"><path d="M0 5h5M10 1h6v4h-6zM21 1l4 4M25 1l-4 4" fill="none" stroke="#aaa"/></svg>
              </DlgCtl>
            </DlgTitle>
            <List>
              <Item>F3(FRONT)</Item>
              <Item $on>曲面:F5(拉伸_1)</Item>
              <Item>F1(SIDE)</Item>
              <Mark />
            </List>
            <DlgRow $h={13} $gap={2} $m="6px 0 0 2px">
              <Btn $w={19} $h={13} $down><Ic n="cursor" s={9} /></Btn>
              <Btn $w={48} $h={13}><Ic n="cursor" s={9} />剖面(X)</Btn>
              <SelectLabel>选择</SelectLabel>
              <Select>使用边/偏移<Caret /></Select>
            </DlgRow>
            <DlgRow $h={12} $gap={2} $m="7px 2px 0 2px">
              <Btn>替换(R)</Btn><Btn $off>删除(D)</Btn><Btn $off>求解(S)</Btn>
            </DlgRow>
            <Status><legend>参考状况</legend>完全放置的</Status>
            <DlgFoot><Btn $w={38}>关闭(C)</Btn></DlgFoot>
          </Dialog>
          <Logo>
            <svg width="45" height="50" viewBox="0 0 45 50">
              <path d="M22.500 2L42 13.500v23L22.500 48 3 36.500v-23z" fill="#1f5f96" stroke="#9aa6ac" strokeWidth="2"/>
              <path d="M22.500 3L10 10l15 3 13-2zM41 14l-6 18-7-12zM23 47l-12-9 16-3 10 3z" fill="#3a93c6" opacity=".7"/>
              <path d="M22.500 14l9 5.500v11l-9 5.500-9-5.500v-11z" fill="#14466f" stroke="#9ab" strokeWidth="1.5"/>
              <path d="M22.500 25l9-5.500M22.500 25v11M22.500 25l-9-5.500" stroke="#9ab"/>
            </svg>
            <LogoText>
              <LogoMain>3D世界网</LogoMain>
              <LogoSub>WWW.3DSJW.COM</LogoSub>
            </LogoText>
          </Logo>
        </Canvas>
      </Main>
    </Page>
  );
}
